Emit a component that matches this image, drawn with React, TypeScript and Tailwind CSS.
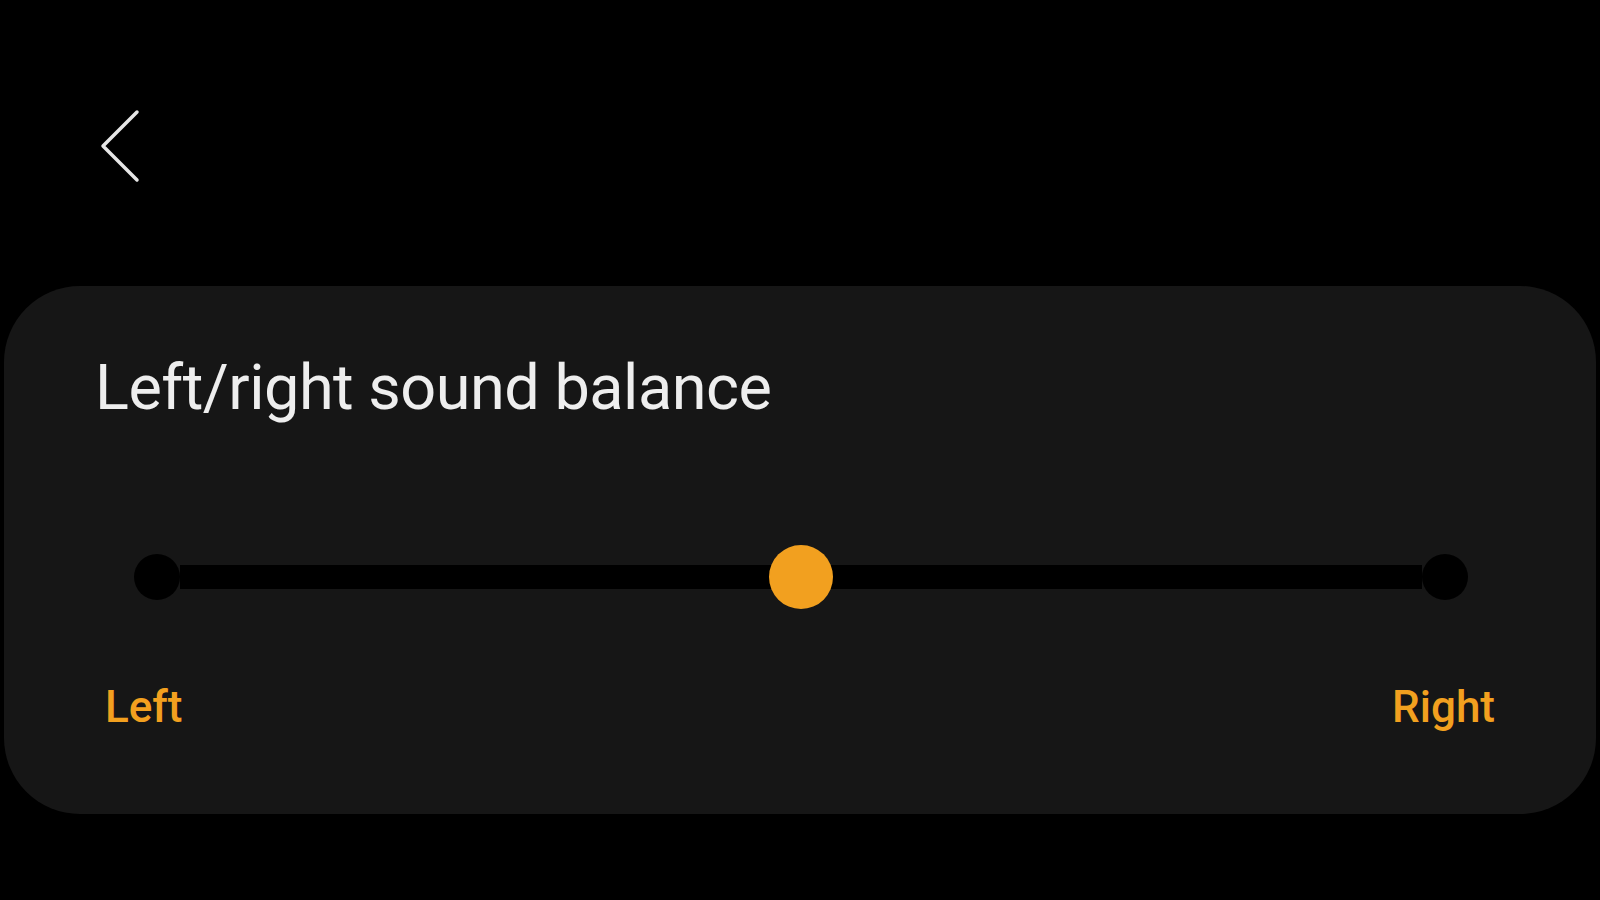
const ACCENT = "#f2a01f";

const BackChevron = () => (
  <svg width="48" height="84" viewBox="0 0 48 84" fill="none" aria-label="Back">
    <polyline
      points="41,8 7,42 41,76"
      stroke="#e6e6e6"
      strokeWidth="3.5"
      strokeLinecap="round"
      strokeLinejoin="round"
    />
  </svg>
);

const BalanceSlider = ({ value }: { value: number }) => (
  <div className="relative flex h-[66px] items-center">
    <div className="h-[46px] w-[46px] shrink-0 rounded-full bg-black" />
    <div className="h-[24px] grow bg-black" />
    <div className="h-[46px] w-[46px] shrink-0 rounded-full bg-black" />
    {/* thumb */}
    <div
      className="absolute top-[1px] h-[64px] w-[64px] -translate-x-1/2 rounded-full"
      style={{ left: `${value * 100}%`, backgroundColor: ACCENT }}
    />
  </div>
);

export default function App() {
  return (
    <div
      className="min-h-[900px] w-full bg-black"
      style={{ fontFamily: "Roboto, 'Noto Sans', sans-serif" }}
    >
      <div className="pl-[96px] pt-[104px]">
        <button type="button" className="block">
          <BackChevron />
        </button>
      </div>

      <div className="mx-[4px] mt-[98px] rounded-[76px] bg-[#161616] pb-[85px] pt-[70px]">
        <h1 className="pl-[91px] text-[63px] font-normal leading-none tracking-[-0.5px] text-[#eeeeee]">
          Left/right sound balance
        </h1>

        <div className="mt-[125px] pl-[130px] pr-[128px]">
          <BalanceSlider value={0.5} />
        </div>

        <div
          className="mt-[75px] flex justify-between pl-[101px] pr-[101px] text-[44px] font-medium leading-none"
          style={{ color: ACCENT }}
        >
          <span>Left</span>
          <span>Right</span>
        </div>
      </div>
    </div>
  );
}
